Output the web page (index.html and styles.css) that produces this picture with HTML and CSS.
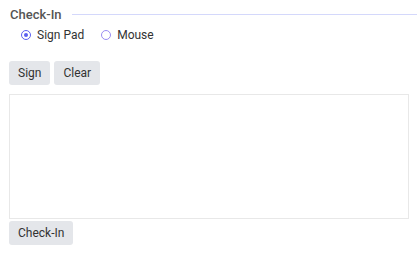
FILE: index.html
```html
<!DOCTYPE html>
<html lang="en">
<head>
  <meta charset="UTF-8" />
  <title>Check-In</title>
  <link rel="stylesheet" href="styles.css">
</head>
<body>
  <div class="checkin">
    <div class="legend">
      <span class="legend-title">Check-In</span>
      <span class="legend-line"></span>
    </div>

    <div class="modes">
      <label class="radio">
        <input type="radio" name="mode" checked />
        <span>Sign Pad</span>
      </label>
      <label class="radio">
        <input type="radio" name="mode" />
        <span>Mouse</span>
      </label>
    </div>

    <div class="actions">
      <button class="btn">Sign</button>
      <button class="btn">Clear</button>
    </div>

    <div class="sign-box"></div>

    <button class="btn btn-submit">Check-In</button>
  </div>
</body>
</html>
```

FILE: styles.css
```css
body {
  margin: 0;
  font-family: Roboto, "Liberation Sans", sans-serif;
  color: #333;
  background: #fff;
}

.checkin {
  padding: 5px 1px 0 9px;
}

.legend {
  display: flex;
  align-items: center;
  height: 18px;
}

.legend-title {
  font-size: 13px;
  font-weight: 500;
  color: #555;
  padding-left: 1px;
  margin-right: 10px;
}

.legend-line {
  flex: 1;
  border-top: 1px solid #d4d8fb;
}

.modes {
  display: flex;
  gap: 17px;
  padding: 3px 0 0 12px;
  height: 18px;
}

.radio {
  display: flex;
  align-items: center;
  font-size: 12px;
  color: #333;
}

.radio input {
  appearance: none;
  width: 10px;
  height: 10px;
  margin: 0 6px 0 0;
  border: 1px solid #9a8cf2;
  border-radius: 50%;
  position: relative;
}

.radio input:checked {
  border-color: #5b5ff0;
}

.radio input:checked::after {
  content: "";
  position: absolute;
  top: 2px;
  left: 2px;
  width: 4px;
  height: 4px;
  border-radius: 50%;
  background: #5b5ff0;
}

.actions {
  display: flex;
  gap: 4px;
  margin-top: 17px;
}

.btn {
  font-family: inherit;
  font-size: 12px;
  color: #333;
  background: #e4e6ea;
  border: none;
  border-radius: 3px;
  height: 24px;
  padding: 0 9px;
  cursor: pointer;
}

.sign-box {
  margin-top: 9px;
  width: 398px;
  height: 123px;
  border: 1px solid #e8e8e8;
}

.btn-submit {
  display: block;
  margin-top: 2px;
}
```
